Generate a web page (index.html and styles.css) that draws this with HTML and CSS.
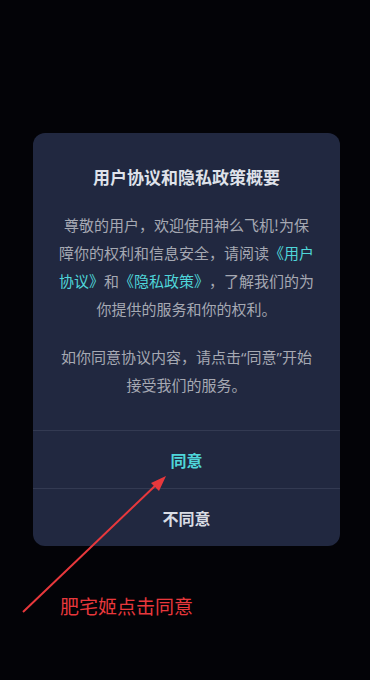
FILE: index.html
```html
<!DOCTYPE html>
<html lang="zh-CN">
<head>
    <meta charset="UTF-8">
    <meta name="viewport" content="width=device-width, initial-scale=1.0">
    <title>用户协议</title>
    <link rel="stylesheet" href="styles.css">
</head>
<body>
    <div class="screen">
        <!-- Dialog -->
        <div class="dialog">
            <div class="dialog-body">
                <h1 class="dialog-title">用户协议和隐私政策概要</h1>
                <p>尊敬的用户，欢迎使用神么飞机!为保障你的权利和信息安全，请阅读<a href="#">《用户协议》</a>和<a href="#">《隐私政策》</a>，了解我们的为你提供的服务和你的权利。</p>
                <p>如你同意协议内容，请点击<span class="quote">“</span>同意<span class="quote">”</span>开始接受我们的服务。</p>
            </div>
            <button class="btn btn-agree">同意</button>
            <button class="btn btn-refuse">不同意</button>
        </div>

        <!-- Annotation -->
        <svg class="arrow" width="370" height="680" viewBox="0 0 370 680">
            <line x1="23" y1="612" x2="157" y2="484" stroke="#e8383c" stroke-width="2"/>
            <polygon points="166,476 151,483 159,491" fill="#e8383c"/>
        </svg>
        <div class="note">肥宅姬点击同意</div>
    </div>
</body>
</html>
```

FILE: styles.css
```css
body {
    margin: 0;
    background-color: #030307;
    font-family: "Noto Sans CJK SC", "Noto Sans", sans-serif;
}
.screen {
    position: relative;
    width: 370px;
    height: 680px;
    padding-top: 133px;
    box-sizing: border-box;
}
.dialog {
    width: 307px;
    margin-left: 33px;
    background-color: #212840;
    border-radius: 12px;
    overflow: hidden;
}
.dialog-body {
    padding: 32px 24px 31px;
    text-align: center;
}
.dialog-title {
    margin: 0 0 22px 0;
    font-size: 17px;
    line-height: 24px;
    font-weight: 700;
    color: #dfe2ea;
}
.dialog-body p {
    margin: 0;
    font-size: 15px;
    line-height: 28px;
    color: #a6a9b3;
    text-spacing-trim: space-all;
    word-break: break-all;
}
.dialog-body p + p {
    margin-top: 20px;
}
.dialog-body a {
    color: #4fd6da;
    text-decoration: none;
}
.quote {
    font-family: "Noto Sans", sans-serif;
}
.btn {
    display: block;
    width: 100%;
    height: 58px;
    border: none;
    border-top: 1px solid #333a52;
    background: transparent;
    font-family: inherit;
    font-size: 16px;
    font-weight: 700;
    cursor: pointer;
}
.btn-agree {
    color: #4fd6da;
}
.btn-refuse {
    color: #d9dce4;
}
.arrow {
    position: absolute;
    left: 0;
    top: 0;
}
.note {
    position: absolute;
    left: 60px;
    top: 593px;
    font-size: 19px;
    line-height: 26px;
    color: #e8383c;
}
```
